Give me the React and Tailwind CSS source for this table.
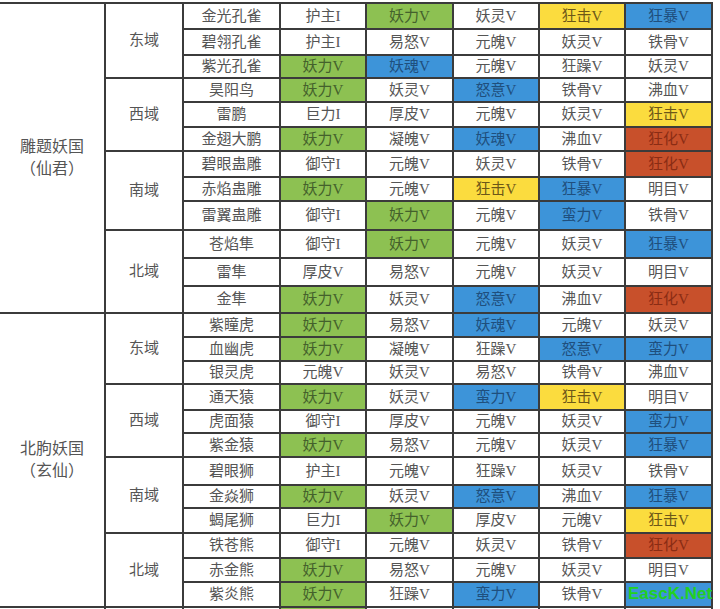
const C = {
  g: "bg-[#8dc152] text-[#44612c]",
  b: "bg-[#3d94d9] text-[#1f4f7d]",
  y: "bg-[#fbdc3e] text-[#6d5718]",
  r: "bg-[#c8502b] text-[#8a2c14]",
};

const groups = [
  {
    title: "雕题妖国",
    sub: "（仙君）",
    regions: [
      {
        name: "东域",
        rows: [
          ["金光孔雀", 26, ["护主I"], ["妖力V", "g"], ["妖灵V"], ["狂击V", "y"], ["狂暴V", "b"]],
          ["碧翎孔雀", 26, ["护主I"], ["易怒V"], ["元魄V"], ["妖灵V"], ["铁骨V"]],
          ["紫光孔雀", 23, ["妖力V", "g"], ["妖魂V", "b"], ["元魄V"], ["狂躁V"], ["妖灵V"]],
        ],
      },
      {
        name: "西域",
        rows: [
          ["昊阳鸟", 24, ["妖力V", "g"], ["妖灵V"], ["怒意V", "b"], ["铁骨V"], ["沸血V"]],
          ["雷鹏", 25, ["巨力I"], ["厚皮V"], ["元魄V"], ["妖灵V"], ["狂击V", "y"]],
          ["金翅大鹏", 24, ["妖力V", "g"], ["凝魄V"], ["妖魂V", "b"], ["沸血V"], ["狂化V", "r"]],
        ],
      },
      {
        name: "南域",
        rows: [
          ["碧眼蛊雕", 26, ["御守I"], ["元魄V"], ["妖灵V"], ["铁骨V"], ["狂化V", "r"]],
          ["赤焰蛊雕", 24, ["妖力V", "g"], ["元魄V"], ["狂击V", "y"], ["狂暴V", "b"], ["明目V"]],
          ["雷翼蛊雕", 29, ["御守I"], ["妖力V", "g"], ["元魄V"], ["蛮力V", "b"], ["铁骨V"]],
        ],
      },
      {
        name: "北域",
        rows: [
          ["苍焰隼", 28, ["御守I"], ["妖力V", "g"], ["元魄V"], ["妖灵V"], ["狂暴V", "b"]],
          ["雷隼", 28, ["厚皮V"], ["易怒V"], ["元魄V"], ["妖灵V"], ["明目V"]],
          ["金隼", 27, ["妖力V", "g"], ["妖灵V"], ["怒意V", "b"], ["沸血V"], ["狂化V", "r"]],
        ],
      },
    ],
  },
  {
    title: "北朐妖国",
    sub: "（玄仙）",
    regions: [
      {
        name: "东域",
        rows: [
          ["紫瞳虎", 24, ["妖力V", "g"], ["易怒V"], ["妖魂V", "b"], ["元魄V"], ["妖灵V"]],
          ["血幽虎", 24, ["妖力V", "g"], ["凝魄V"], ["狂躁V"], ["怒意V", "b"], ["蛮力V", "b"]],
          ["银灵虎", 23, ["元魄V"], ["妖灵V"], ["易怒V"], ["铁骨V"], ["沸血V"]],
        ],
      },
      {
        name: "西域",
        rows: [
          ["通天猿", 26, ["妖力V", "g"], ["妖灵V"], ["蛮力V", "b"], ["狂击V", "y"], ["明目V"]],
          ["虎面猿", 23, ["御守I"], ["厚皮V"], ["元魄V"], ["妖灵V"], ["蛮力V", "b"]],
          ["紫金猿", 24, ["妖力V", "g"], ["易怒V"], ["元魄V"], ["妖灵V"], ["狂暴V", "b"]],
        ],
      },
      {
        name: "南域",
        rows: [
          ["碧眼狮", 28, ["护主I"], ["元魄V"], ["狂躁V"], ["妖灵V"], ["铁骨V"]],
          ["金焱狮", 23, ["妖力V", "g"], ["妖灵V"], ["怒意V", "b"], ["沸血V"], ["狂暴V", "b"]],
          ["蝎尾狮", 25, ["巨力I"], ["妖力V", "g"], ["厚皮V"], ["元魄V"], ["狂击V", "y"]],
        ],
      },
      {
        name: "北域",
        rows: [
          ["铁苍熊", 25, ["御守I"], ["元魄V"], ["妖灵V"], ["铁骨V"], ["狂化V", "r"]],
          ["赤金熊", 24, ["妖力V", "g"], ["易怒V"], ["元魄V"], ["妖灵V"], ["明目V"]],
          ["紫炎熊", 25, ["妖力V", "g"], ["狂躁V"], ["蛮力V", "b"], ["铁骨V"], ["", "b"]],
        ],
      },
    ],
  },
  {
    title: "",
    sub: "",
    regions: [
      {
        name: "",
        rows: [["", 25, ["", "g"], [""], [""], [""], [""]]],
      },
    ],
  },
];

const cell = "border-2 border-[#3b3b3b] p-0 text-center align-middle";

export default function App() {
  const body = [];
  groups.forEach((grp, gi) => {
    const total = grp.regions.reduce((n, r) => n + r.rows.length, 0);
    grp.regions.forEach((reg, ri) => {
      reg.rows.forEach((row, i) => {
        const [name, h, ...vals] = row;
        body.push(
          <tr key={`${gi}-${ri}-${i}`} style={{ height: h }}>
            {ri === 0 && i === 0 ? (
              <td rowSpan={total} className={`${cell} border-l-0 text-[16px] leading-[22px]`}>
                <div>{grp.title}</div>
                <div>{grp.sub}</div>
              </td>
            ) : null}
            {i === 0 ? (
              <td rowSpan={reg.rows.length} className={cell}>
                {reg.name}
              </td>
            ) : null}
            <td className={cell}>{name}</td>
            {vals.map(([t, c], k) => (
              <td key={k} className={`${cell} ${c ? C[c] : ""}`}>
                {t}
              </td>
            ))}
          </tr>
        );
      });
    });
  });

  return (
    <div className="relative h-[609px] w-[720px] overflow-hidden bg-white pt-[2px] font-['Liberation_Serif','Noto_Sans_CJK_SC',serif] text-[15px] leading-none text-[#555]">
      <table className="w-[712px] table-fixed border-collapse">
        <colgroup>
          <col className="w-[105px]" />
          <col className="w-[78px]" />
          <col className="w-[97px]" />
          <col className="w-[86px]" />
          <col className="w-[87px]" />
          <col className="w-[86px]" />
          <col className="w-[86px]" />
          <col className="w-[87px]" />
        </colgroup>
        <tbody>{body}</tbody>
      </table>
      <div className="absolute left-[628px] top-[584px] font-['Liberation_Sans',sans-serif] text-[17px] font-bold leading-[20px] text-[#22d022]">
        EascK.Net
      </div>
    </div>
  );
}
